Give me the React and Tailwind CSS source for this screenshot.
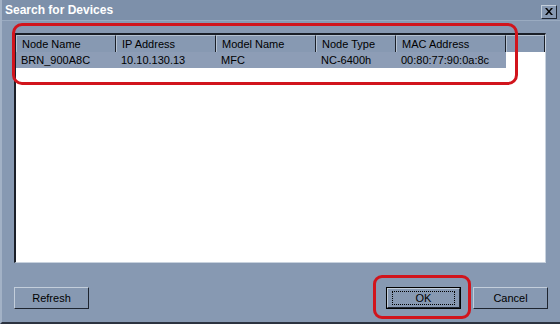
// Win2k-style "Search for Devices" dialog with red callout marks.
const cols = [
  { label: 'Node Name', val: 'BRN_900A8C', w: 'w-[100px]' },
  { label: 'IP Address', val: '10.10.130.13', w: 'w-[100px]' },
  { label: 'Model Name', val: 'MFC', w: 'w-[100px]' },
  { label: 'Node Type', val: 'NC-6400h', w: 'w-[80px]' },
  { label: 'MAC Address', val: '00:80:77:90:0a:8c', w: 'w-[110px]' },
]

function Btn({ children, def }) {
  return (
    <div
      className={`flex h-[22px] items-center justify-center bg-[#8799b2] ${
        def ? 'w-[75px] border border-black' : 'w-[75px]'
      }`}
    >
      <div className="flex h-full w-full items-center justify-center border-t border-l border-t-[#c3cedb] border-l-[#c3cedb] border-r border-b border-r-[#1e2530] border-b-[#1e2530]">
        {def ? (
          <span className="flex h-[14px] w-[63px] items-center justify-center border border-dotted border-black">{children}</span>
        ) : (
          children
        )}
      </div>
    </div>
  )
}

export default function App() {
  return (
    <div
      className="relative flex h-[324px] w-[560px] flex-col overflow-hidden border-l-2 border-b-2 border-l-[#a3b2c6] border-b-[#2c3340] bg-[#8799b2] text-[11px] text-black"
      style={{ fontFamily: '"Liberation Sans", Arial, sans-serif' }}
    >
      {/* title bar */}
      <div className="flex h-[21px] shrink-0 items-center justify-between border-b border-[#9aabc1] bg-[#7d90aa] pl-[3px] pr-[3px]">
        <span className="text-[12px] font-bold text-white">Search for Devices</span>
        <div className="mt-[3px] flex h-[14px] w-[16px] items-center justify-center border-t border-l border-t-[#c3cedb] border-l-[#c3cedb] border-r border-b border-r-[#1e2530] border-b-[#1e2530] bg-[#8799b2]">
          <svg width="8" height="7" viewBox="0 0 8 7">
            <path d="M0 0h2l2 2.5L6 0h2L5 3.5 8 7H6L4 4.5 2 7H0l3-3.5z" fill="#000" />
          </svg>
        </div>
      </div>

      {/* list */}
      <div className="ml-[12px] mt-[12px] h-[230px] w-[532px] border-t-2 border-l-2 border-t-[#1a1f28] border-l-[#1a1f28] border-r border-b border-r-[#c8d2de] border-b-[#c8d2de] bg-white">
        <div className="flex h-[17px]">
          {cols.map((c) => (
            <div
              key={c.label}
              className={`${c.w} flex shrink-0 items-center border-t border-l border-t-[#b6c3d3] border-l-[#b6c3d3] border-r border-r-[#1a1f28] bg-[#8799b2] pl-[5px]`}
            >
              {c.label}
            </div>
          ))}
          <div className="flex-1 border-t border-l border-t-[#b6c3d3] border-l-[#b6c3d3] border-r border-r-[#1a1f28] bg-[#8799b2]" />
        </div>
        <div className="flex h-[16px] w-[490px] items-center bg-[#8d9db6]">
          {cols.map((c) => (
            <div key={c.label} className={`${c.w} shrink-0 pl-[5px]`}>
              {c.val}
            </div>
          ))}
        </div>
      </div>

      {/* buttons */}
      <div className="mt-[24px] flex items-center pl-[12px] pr-[12px]">
        <Btn>Refresh</Btn>
        <div className="flex-1" />
        <Btn def>OK</Btn>
        <div className="w-[12px]" />
        <Btn>Cancel</Btn>
      </div>

      {/* red callouts */}
      <div className="pointer-events-none absolute left-[10px] top-[23px] h-[62px] w-[506px] rounded-[10px] border-[3px] border-[#d1141c]" />
      <div className="pointer-events-none absolute left-[371px] top-[275px] h-[44px] w-[98px] rounded-[9px] border-[3px] border-[#d1141c]" />
    </div>
  )
}
